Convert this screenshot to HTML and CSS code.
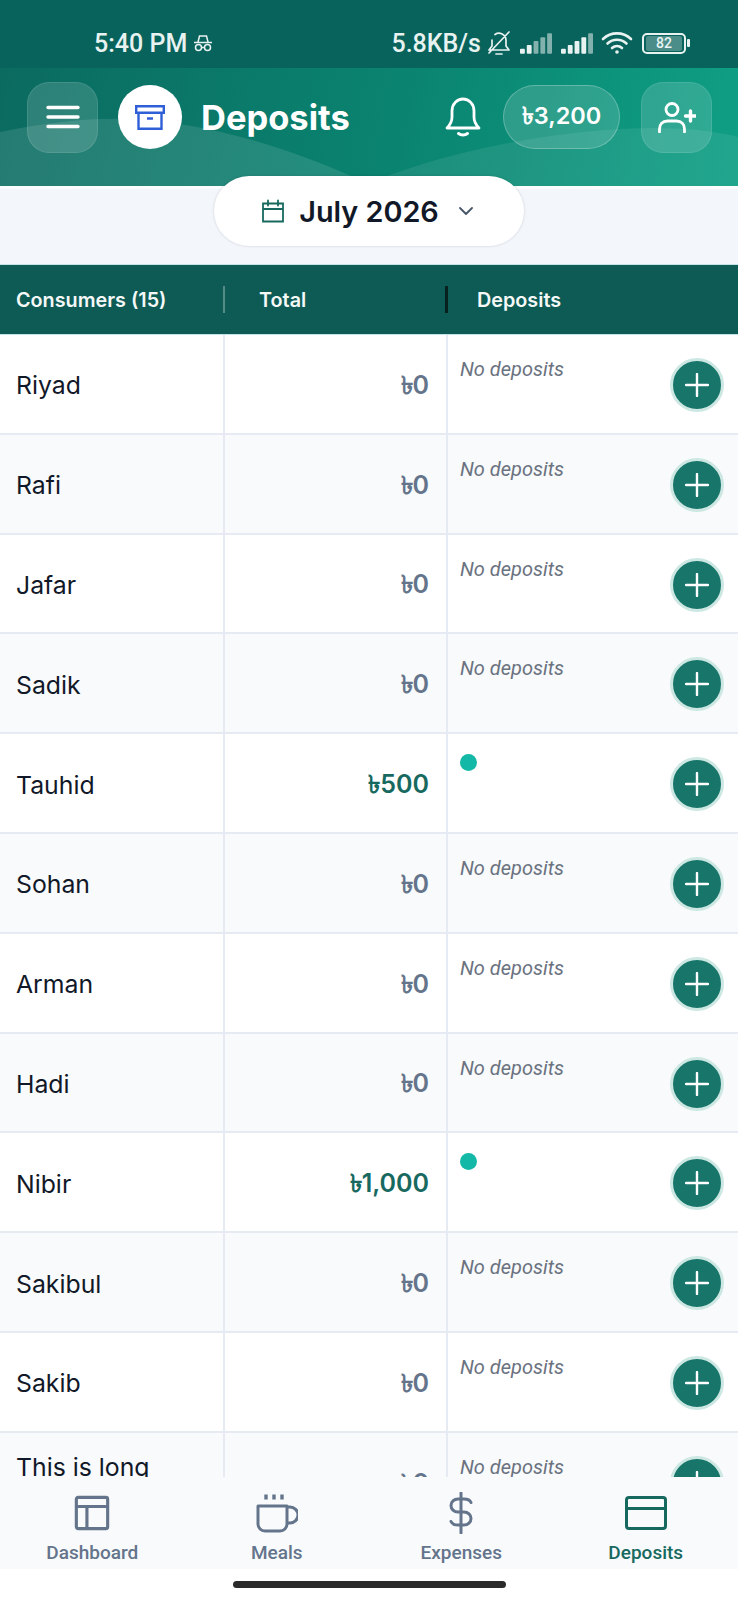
FILE: index.html
```html
<!DOCTYPE html>
<html lang="en">
<head>
<meta charset="utf-8">
<title>Deposits</title>
<link rel="stylesheet" href="styles.css">
</head>
<body>
<svg class="defs" width="0" height="0" aria-hidden="true">
  <symbol id="plus" viewBox="0 0 24 24"><path d="M12 1v22M1 12h22" fill="none" stroke="#fff" stroke-width="2.4" stroke-linecap="round"/></symbol>
</svg>
<div class="app">
  <div class="top">
    <div class="status">
      <div class="status-left">
        <span>5:40 PM</span>
        <svg class="st-spy" viewBox="0 0 20 18" fill="none" stroke="#e8f3f1" stroke-width="1.5"><path d="M5 8l1.5-6h7L15 8M1 8.500h18"/><circle cx="5.500" cy="13.500" r="3"/><circle cx="14.500" cy="13.500" r="3"/><path d="M8.500 13.500h3"/></svg>
      </div>
      <div class="status-right">
        <span>5.8KB/s</span>
        <svg class="st-mute" viewBox="0 0 24 26" fill="none" stroke="#e8f3f1" stroke-width="1.700" stroke-linecap="round" stroke-linejoin="round"><path d="M2 20h20l-3-4V10a7 7 0 0 0-11-5.500M5 10v6l-3 4M9 24h6M2 23L22 2"/></svg>
        <svg class="st-sig" viewBox="0 0 33 21"><g fill="#e8f3f1"><rect x="0" y="16" width="5" height="5" rx="1"/><rect x="7" y="12" width="5" height="9" rx="1"/></g><g fill="#e8f3f1" opacity=".55"><rect x="14" y="8" width="5" height="13" rx="1"/><rect x="21" y="4" width="5" height="17" rx="1"/><rect x="28" y="0" width="5" height="21" rx="1"/></g></svg>
        <svg class="st-sig" viewBox="0 0 33 21"><g fill="#e8f3f1"><rect x="0" y="16" width="5" height="5" rx="1"/><rect x="7" y="12" width="5" height="9" rx="1"/><rect x="14" y="8" width="5" height="13" rx="1"/><rect x="21" y="4" width="5" height="17" rx="1"/></g><rect x="28" y="0" width="5" height="21" rx="1" fill="#e8f3f1" opacity=".55"/></svg>
        <svg class="st-wifi" viewBox="0 0 32 24" fill="none" stroke="#e8f3f1" stroke-width="2.600" stroke-linecap="round"><path d="M2 8c8-7.500 20-7.500 28 0M6.500 12.500c5.500-5 13.500-5 19 0M11 17c3-2.500 7-2.500 10 0"/><circle cx="16" cy="21" r="1.800" fill="#e8f3f1" stroke="none"/></svg>
        <div class="battery"><span class="battery-fill">82</span></div>
        <span class="battery-tip"></span>
      </div>
    </div>
    <header class="appbar">
      <svg class="waves" viewBox="0 0 738 118" preserveAspectRatio="none" aria-hidden="true">
        <path d="M0 64C50 54 90 50 125 51C200 53 290 78 372 118H0Z" fill="#fff" fill-opacity=".11"/>
        <path d="M362 118C440 84 560 60 655 60C690 60 720 64 738 69V118Z" fill="#fff" fill-opacity=".08"/>
      </svg>
      <button class="glass-btn">
        <svg viewBox="0 0 34 24" width="34" height="24" fill="none" stroke="#fff" stroke-width="3.400" stroke-linecap="round"><path d="M2 2.500h30M2 12h30M2 21.500h30"/></svg>
      </button>
      <div class="logo">
        <svg viewBox="0 0 30 25" width="30" height="25" fill="none" stroke="#2f5fd7" stroke-width="2.400"><path d="M1.200 1.200h27.600v6.500H1.200zM3.500 7.700v16h23v-16M12 13.500h6"/></svg>
      </div>
      <h1 class="title">Deposits</h1>
      <svg class="bell" viewBox="0 0 36 40" fill="none" stroke="#fff" stroke-width="2.800" stroke-linejoin="round" stroke-linecap="round"><path d="M2 31c3-3 5-6 5-11v-6C7 7 12 2 18 2s11 5 11 12v6c0 5 2 8 5 11z"/><path d="M13.500 36.500c2.500 2 6.500 2 9 0" stroke-width="3"/></svg>
      <div class="balance">৳3,200</div>
      <button class="glass-btn add-user">
        <svg viewBox="0 0 38 31" width="38" height="31" fill="none" stroke="#fff" stroke-width="2.800" stroke-linecap="round"><circle cx="14" cy="7.500" r="6"/><path d="M1.500 30v-3c0-5 3-8 8-8h9c5 0 8 3 8 8v3"/><path d="M32.500 9v10M27.500 14h10" stroke-width="3.400"/></svg>
      </button>
    </header>
  </div>

  <div class="month-bar">
    <button class="month-pill">
      <svg class="cal" viewBox="0 0 24 24" width="24" height="24" fill="none" stroke="#17695f" stroke-width="1.800" stroke-linecap="round"><path d="M2 4.500h20v18H2zM2 10h20M7 1.500v5M17 1.500v5"/></svg>
      <span class="month-text">July 2026</span>
      <svg viewBox="0 0 14 8" width="14" height="8" fill="none" stroke="#475569" stroke-width="1.800" stroke-linecap="round" stroke-linejoin="round"><path d="M1 1l6 6 6-6"/></svg>
    </button>
  </div>

  <div class="thead">
    <div class="th th-name"><span>Consumers (15)</span></div>
    <div class="th th-total"><span>Total</span></div>
    <div class="th th-dep"><span>Deposits</span></div>
  </div>

  <main class="tbody">
    <div class="row"><div class="c-name">Riyad</div><div class="c-total">৳0</div><div class="c-dep"><span class="none">No deposits</span><button class="add"><svg width="24" height="24"><use href="#plus"/></svg></button></div></div>
    <div class="row"><div class="c-name">Rafi</div><div class="c-total">৳0</div><div class="c-dep"><span class="none">No deposits</span><button class="add"><svg width="24" height="24"><use href="#plus"/></svg></button></div></div>
    <div class="row"><div class="c-name">Jafar</div><div class="c-total">৳0</div><div class="c-dep"><span class="none">No deposits</span><button class="add"><svg width="24" height="24"><use href="#plus"/></svg></button></div></div>
    <div class="row"><div class="c-name">Sadik</div><div class="c-total">৳0</div><div class="c-dep"><span class="none">No deposits</span><button class="add"><svg width="24" height="24"><use href="#plus"/></svg></button></div></div>
    <div class="row"><div class="c-name">Tauhid</div><div class="c-total has">৳500</div><div class="c-dep"><span class="dot"></span><button class="add"><svg width="24" height="24"><use href="#plus"/></svg></button></div></div>
    <div class="row"><div class="c-name">Sohan</div><div class="c-total">৳0</div><div class="c-dep"><span class="none">No deposits</span><button class="add"><svg width="24" height="24"><use href="#plus"/></svg></button></div></div>
    <div class="row"><div class="c-name">Arman</div><div class="c-total">৳0</div><div class="c-dep"><span class="none">No deposits</span><button class="add"><svg width="24" height="24"><use href="#plus"/></svg></button></div></div>
    <div class="row"><div class="c-name">Hadi</div><div class="c-total">৳0</div><div class="c-dep"><span class="none">No deposits</span><button class="add"><svg width="24" height="24"><use href="#plus"/></svg></button></div></div>
    <div class="row"><div class="c-name">Nibir</div><div class="c-total has">৳1,000</div><div class="c-dep"><span class="dot"></span><button class="add"><svg width="24" height="24"><use href="#plus"/></svg></button></div></div>
    <div class="row"><div class="c-name">Sakibul</div><div class="c-total">৳0</div><div class="c-dep"><span class="none">No deposits</span><button class="add"><svg width="24" height="24"><use href="#plus"/></svg></button></div></div>
    <div class="row"><div class="c-name">Sakib</div><div class="c-total">৳0</div><div class="c-dep"><span class="none">No deposits</span><button class="add"><svg width="24" height="24"><use href="#plus"/></svg></button></div></div>
    <div class="row"><div class="c-name">This is long<br>name</div><div class="c-total">৳0</div><div class="c-dep"><span class="none">No deposits</span><button class="add"><svg width="24" height="24"><use href="#plus"/></svg></button></div></div>
  </main>

  <nav class="nav">
    <div class="nav-item">
      <svg class="nav-icon" viewBox="-3.800 -3.800 45.600 45.600" fill="none" stroke="#64748b" stroke-width="3.400" stroke-linejoin="round"><rect x="2" y="2" width="34" height="34" rx="2"/><path d="M2 12h34M13.500 12v24"/></svg>
      <span>Dashboard</span>
    </div>
    <div class="nav-item">
      <svg class="nav-icon" viewBox="0 0 42 40" fill="none" stroke="#64748b" stroke-width="3" stroke-linecap="round" stroke-linejoin="round"><path d="M10 1.500v5M18 1.500v5M26 1.500v5" stroke-linecap="butt" stroke-width="3.400"/><path d="M2 13h29v18a7 7 0 0 1-7 7H9a7 7 0 0 1-7-7zM31 14h3a6.500 6.500 0 0 1 0 16h-3"/></svg>
      <span>Meals</span>
    </div>
    <div class="nav-item">
      <svg class="nav-icon" viewBox="0 0 38 42" fill="none" stroke="#64748b" stroke-width="3" stroke-linecap="round"><path d="M19 1v40M29 10.500c-1-2.500-4-3.500-7-3.500h-6c-4 0-7 3-7 6.500s3 6.500 7 6.500h6c4 0 7 3 7 6.500S26 33 22 33h-6c-3 0-6-1-7-3.500"/></svg>
      <span>Expenses</span>
    </div>
    <div class="nav-item active">
      <svg class="nav-icon" viewBox="0 0 42 34" fill="none" stroke="#17695f" stroke-width="3" stroke-linejoin="round"><rect x="1.500" y="1.500" width="39" height="31" rx="2.500"/><path d="M1.500 12.500h39"/></svg>
      <span>Deposits</span>
    </div>
  </nav>

  <div class="gesture"><span class="handle"></span></div>
</div>
</body>
</html>
```

FILE: styles.css
```css
* { box-sizing: border-box; }
html, body { margin: 0; padding: 0; }
body { width: 738px; height: 1600px; overflow: hidden; background: #fff; font-family: Inter, "Noto Sans", "DejaVu Sans", sans-serif; color: #111827; }
button { border: 0; padding: 0; font: inherit; background: none; }
.defs { position: absolute; }
.app { display: flex; flex-direction: column; height: 1600px; }

.top { background: linear-gradient(100deg, #0b6a60 0%, #0a8470 55%, #0f9f85 100%); flex: none; }
.status { height: 68px; background: #08635c; display: flex; justify-content: space-between; align-items: center; padding: 28px 48px 10px 94px; color: #e8f3f1; font-size: 25px; font-weight: 500; font-family: Roboto, Inter, sans-serif; }
.status-left { display: flex; align-items: center; gap: 6px; }
.status-right { display: flex; align-items: center; }
.st-spy { width: 20px; height: 18px; }
.st-mute { width: 24px; height: 26px; margin-left: 6px; }
.st-sig { width: 32px; height: 21px; margin-left: 9px; }
.st-wifi { width: 32px; height: 24px; margin-left: 8px; }
.battery { width: 44px; height: 21px; margin-left: 9px; border: 2px solid #e8f3f1; border-radius: 5px; padding: 1px 2px; display: flex; }
.battery-fill { flex: 1; background: rgba(232, 243, 241, .3); font-size: 14px; line-height: 15px; text-align: center; border-radius: 2px; }
.battery-tip { width: 3px; height: 8px; margin-left: 1px; background: #e8f3f1; border-radius: 1px; }

.appbar { position: relative; height: 118px; display: flex; align-items: center; padding: 0 26px 20px 27px; overflow: hidden; }
.waves { position: absolute; left: 0; top: 0; width: 100%; height: 100%; }
.appbar > *:not(.waves) { position: relative; }
.glass-btn { width: 71px; height: 71px; border-radius: 22px; background: rgba(255, 255, 255, .14); border: 1px solid rgba(255, 255, 255, .1); display: flex; align-items: center; justify-content: center; flex: none; }
.logo { width: 64px; height: 64px; margin-left: 20px; border-radius: 50%; background: #fff; display: flex; align-items: center; justify-content: center; flex: none; }
.title { margin: 0 0 0 19px; font-size: 34.500px; font-weight: 700; color: #fff; flex: 1; }
.bell { width: 36px; height: 40px; margin-right: 22px; }
.balance { width: 117px; height: 64px; border-radius: 32px; background: rgba(255, 255, 255, .14); border: 1.500px solid rgba(255, 255, 255, .25); color: #fff; font-size: 23.500px; font-weight: 600; display: flex; align-items: center; justify-content: center; margin-right: 21px; }

.month-bar { height: 78px; background: #f3f6fb; display: flex; justify-content: center; flex: none; border-top: 3px solid #fbfcfe; }
.month-pill { position: relative; margin: -13px 0 0 0; height: 70px; width: 310px; padding-right: 4px; border-radius: 35px; background: #fff; box-shadow: 0 0 3px rgba(15, 23, 42, .16); display: flex; align-items: center; justify-content: center; gap: 15px; }
.cal { margin-right: -1px; }
.month-text { font-size: 28.800px; font-weight: 600; color: #111827; margin-right: 5px; }

.thead { height: 71px; background: #0e5b55; display: flex; align-items: center; color: #f4f8f7; font-size: 19.800px; font-weight: 600; flex: none; border-top: 1px solid #c5e3e6; border-bottom: 1px solid #c5e3e6; }
.th { height: 27px; display: flex; align-items: center; }
.th-name { width: 225px; padding-left: 16px; border-right: 2px solid rgba(255, 255, 255, .3); }
.th-total { width: 223px; padding-left: 34px; border-right: 3px solid #08201e; }
.th-dep { padding-left: 29px; }

.tbody { flex: 1; min-height: 0; overflow: hidden; }
.row { height: 99.800px; display: flex; border-bottom: 2px solid #e6ebf3; background: #fff; }
.row:nth-child(even) { background: #f8fafc; }
.c-name { width: 225px; padding: 3px 0 0 16px; display: flex; align-items: center; font-size: 24.800px; line-height: 32px; border-right: 2px solid #e6ebf3; }
.c-total { width: 223px; padding: 7px 17px 0 0; display: flex; align-items: center; justify-content: flex-end; font-size: 25px; font-weight: 600; color: #64748b; border-right: 2px solid #e6ebf3; }
.c-total.has { color: #17695f; }
.c-dep { flex: 1; padding: 20px 14px 0 12px; display: flex; justify-content: space-between; align-items: flex-start; }
.none { margin-top: 1px; font-family: Roboto, sans-serif; font-style: italic; font-size: 20px; line-height: 26px; color: #6b7280; }
.dot { width: 17px; height: 17px; border-radius: 50%; background: #14b8a6; }
.add { width: 54px; height: 54px; margin-top: 3px; border-radius: 50%; background: #17756a; border: 3px solid #cde7e3; display: flex; align-items: center; justify-content: center; flex: none; }

.nav { height: 92px; background: #f8fafc; display: grid; grid-template-columns: repeat(4, 1fr); flex: none; padding-top: 15px; }
.nav-item { display: flex; flex-direction: column; align-items: center; color: #64748b; font-family: Roboto, sans-serif; font-size: 19px; font-weight: 500; line-height: 24px; }
.nav-item.active { color: #17695f; }
.nav-icon { width: 42px; height: 42px; margin-bottom: 7px; }

.gesture { height: 31px; flex: none; display: flex; justify-content: center; align-items: center; background: #fff; }
.handle { width: 273px; height: 7px; border-radius: 4px; background: #2b2b2b; }
```
